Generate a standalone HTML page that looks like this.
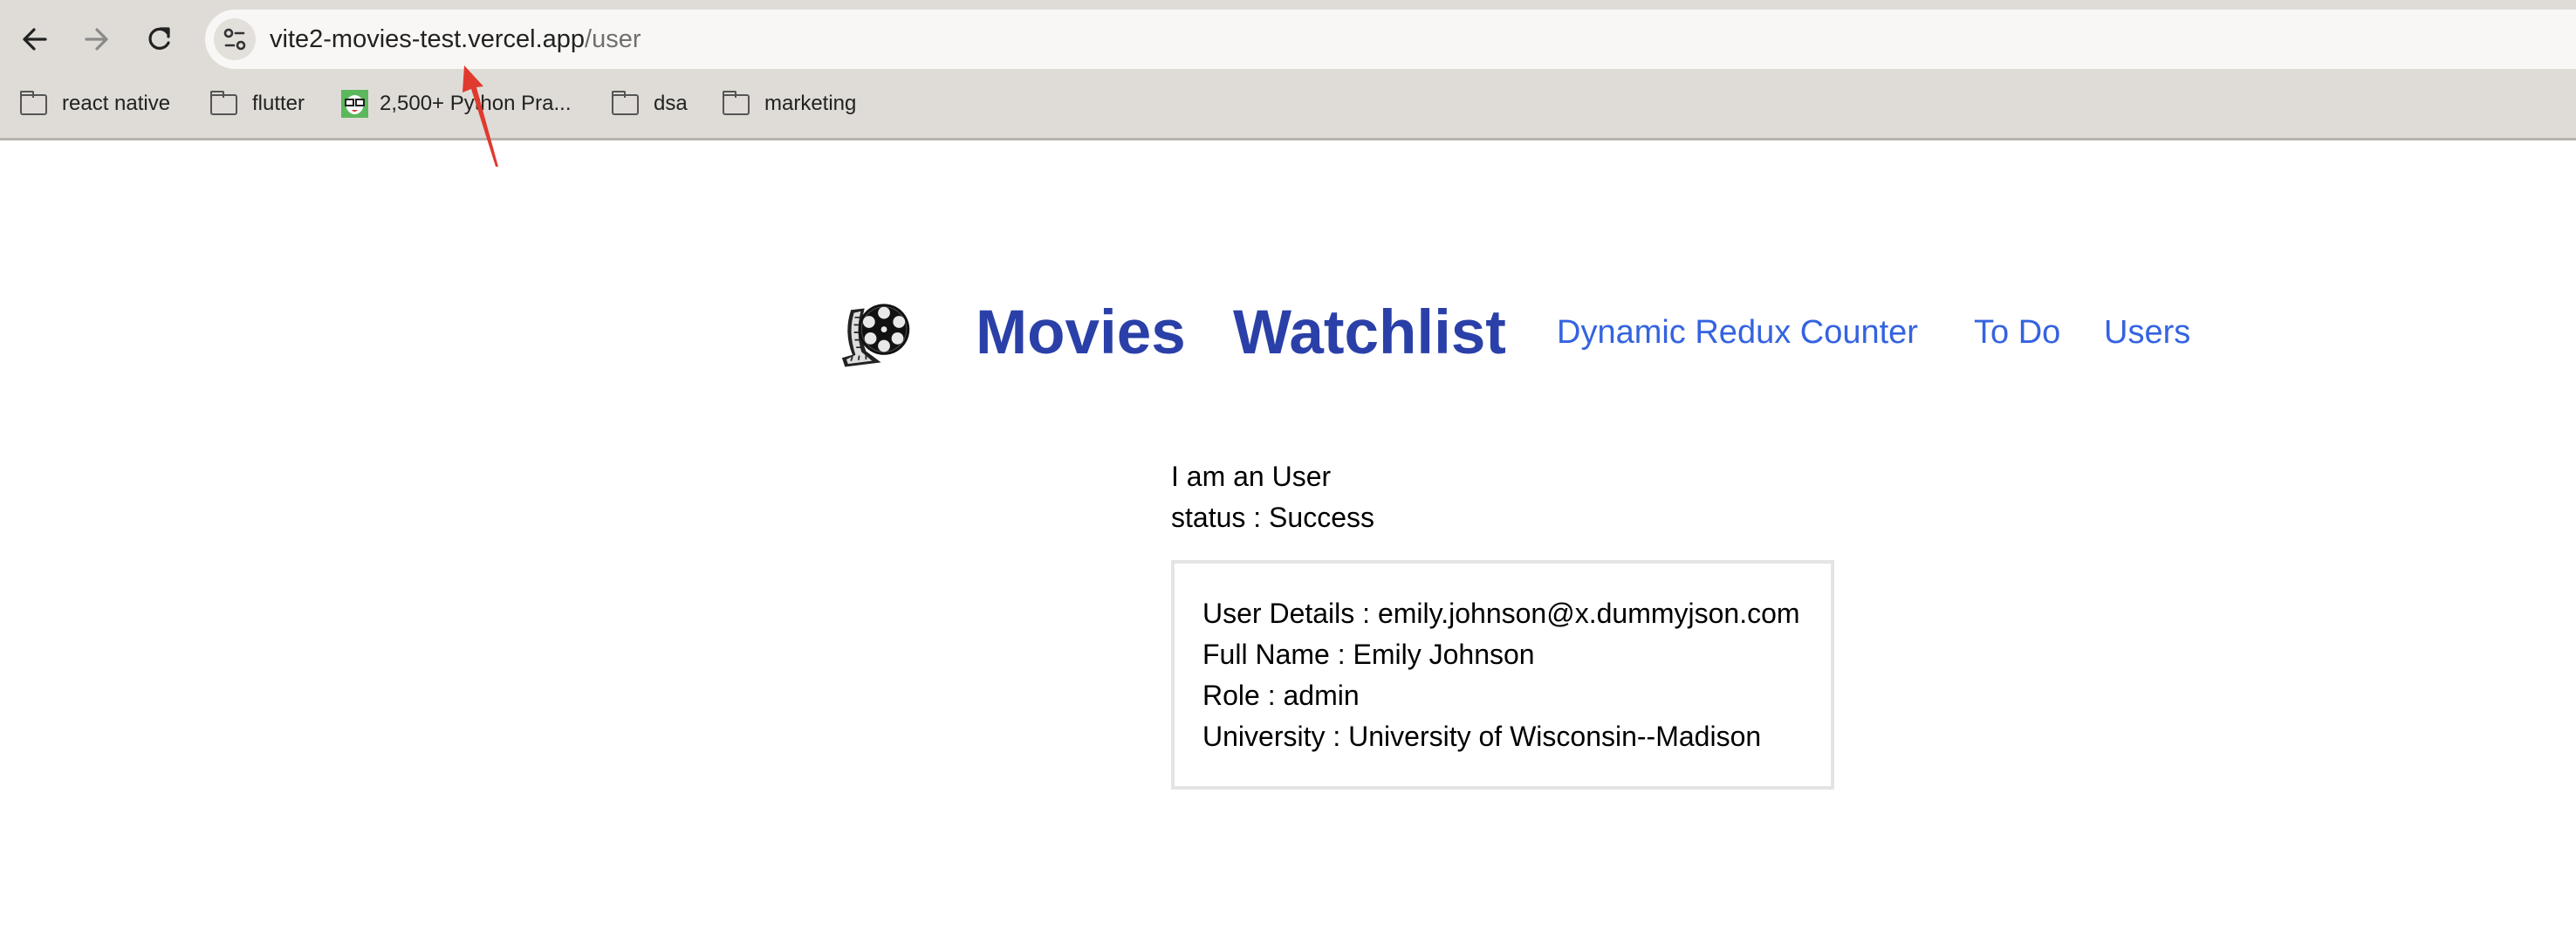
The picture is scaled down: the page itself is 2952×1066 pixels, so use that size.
<!DOCTYPE html>
<html><head><meta charset="utf-8"><style>
*{margin:0;padding:0;box-sizing:border-box}
html,body{width:2952px;height:1066px;overflow:hidden;background:#fff;font-family:"Liberation Sans",Arial,sans-serif}
.chrome{position:absolute;left:0;top:0;width:2952px;height:161px;background:#dfdcd8;border-bottom:3px solid #b8b3ad}
.url{position:absolute;left:235px;top:11px;width:2760px;height:68px;background:#f8f7f5;border-radius:34px}
.urltext{position:absolute;left:309px;top:29px;font-size:29px;color:#222;white-space:nowrap}
.urltext span{color:#6f6f6f}
.site{position:absolute;left:245px;top:21px;width:48px;height:48px;border-radius:50%;background:#e3e0dc}
.bm{position:absolute;top:105px;font-size:24px;color:#222;white-space:nowrap}
.folder{position:absolute;top:108px;width:31px;height:24px;border:2.5px solid #555;border-radius:3px}
.folder:before{content:"";position:absolute;left:-2.5px;top:-6px;width:12px;height:6px;border:2.5px solid #555;border-bottom:none;border-radius:2px 2px 0 0}
.title{position:absolute;top:341px;font-size:71px;font-weight:bold;color:#2a40a8;white-space:nowrap}
.nav{position:absolute;top:360px;font-size:38px;color:#3563e0;white-space:nowrap}
.txt{position:absolute;font-size:32px;color:#000;white-space:nowrap;line-height:47px}
.box{position:absolute;left:1342px;top:642px;width:760px;height:263px;border:4px solid #e4e4e6}
</style></head><body>
<div class="chrome"></div>
<svg style="position:absolute;left:0;top:0" width="240" height="90">
<g stroke="#222" stroke-width="3.2" fill="none" stroke-linecap="round" stroke-linejoin="round">
<path d="M52 45H28M39 34L28 45L39 56"/>
</g>
<g stroke="#8a8a8a" stroke-width="3.2" fill="none" stroke-linecap="round" stroke-linejoin="round">
<path d="M99 45H122M111 34L122 45L111 56"/>
</g>
<g stroke="#222" stroke-width="3.2" fill="none" stroke-linecap="round">
<path d="M192 38A11 11 0 1 0 193 49"/>
<path d="M184 33L193 33L193 42" stroke-linejoin="round"/>
</g>
</svg>
<div class="url"></div>
<div class="site"></div>
<svg style="position:absolute;left:245px;top:21px" width="48" height="48">
<g stroke="#333" stroke-width="2.6" fill="none" stroke-linecap="round">
<circle cx="17" cy="17" r="4"/><path d="M25 17H34"/>
<circle cx="31" cy="31" r="4"/><path d="M14 31H23"/>
</g></svg>
<div class="urltext">vite2-movies-test.vercel.app<span>/user</span></div>

<div class="folder" style="left:23px"></div><div class="bm" style="left:71px">react native</div>
<div class="folder" style="left:241px"></div><div class="bm" style="left:289px">flutter</div>
<div style="position:absolute;left:391px;top:103px;width:31px;height:32px;background:#5cb85c"></div>
<svg style="position:absolute;left:391px;top:103px" width="31" height="32"><ellipse cx="15.5" cy="17" rx="10" ry="11" fill="#fff"/><rect x="5" y="11" width="9" height="7" fill="none" stroke="#222" stroke-width="2"/><rect x="17" y="11" width="9" height="7" fill="none" stroke="#222" stroke-width="2"/><path d="M12 23Q15 27 19 23" fill="#c33"/></svg>
<div class="bm" style="left:435px">2,500+ Python Pra...</div>
<div class="folder" style="left:701px"></div><div class="bm" style="left:749px">dsa</div>
<div class="folder" style="left:828px"></div><div class="bm" style="left:876px">marketing</div>

<svg style="position:absolute;left:0;top:0" width="700" height="220"><polygon points="532,75 554,99 546,100 571,191 568,191 540,102 530,106" fill="#e03a2e"/></svg>

<svg style="position:absolute;left:958px;top:338px" width="86" height="86" viewBox="0 0 100 100">
<path d="M20 20 Q10 50 22 80 L8 84 L12 96 L60 90 L40 75 Q30 50 38 18 Z" fill="#222"/>
<path d="M24 24 Q16 50 26 80 L14 86 L16 92 L48 88 L34 76 Q26 50 33 22 Z" fill="#ddd"/>
<path d="M25 30H32M24 40H30M24 50H30M25 60H31M27 70H33M20 88L22 82M30 87L31 81M40 86L40 80" stroke="#222" stroke-width="2"/>
<circle cx="64" cy="46" r="34" fill="#111"/>
<circle cx="64" cy="46" r="30" fill="none" stroke="#555" stroke-width="1"/>
<circle cx="64" cy="24" r="8" fill="#e8e8e8"/><circle cx="64" cy="68" r="8" fill="#e8e8e8"/>
<circle cx="44" cy="36" r="8" fill="#e8e8e8"/><circle cx="84" cy="36" r="8" fill="#e8e8e8"/>
<circle cx="46" cy="58" r="8" fill="#e8e8e8"/><circle cx="82" cy="58" r="8" fill="#e8e8e8"/>
<circle cx="64" cy="46" r="4" fill="#e8e8e8"/>
</svg>
<div class="title" style="left:1118px">Movies</div>
<div class="title" style="left:1413px">Watchlist</div>
<div class="nav" style="left:1784px">Dynamic Redux Counter</div>
<div class="nav" style="left:2262px">To Do</div>
<div class="nav" style="left:2411px">Users</div>

<div class="txt" style="left:1342px;top:523px">I am an User</div>
<div class="txt" style="left:1342px;top:570px">status : Success</div>
<div class="box"></div>
<div class="txt" style="left:1378px;top:680px">User Details : emily.johnson@x.dummyjson.com<br>Full Name : Emily Johnson<br>Role : admin<br>University : University of Wisconsin--Madison</div>
</body></html>
